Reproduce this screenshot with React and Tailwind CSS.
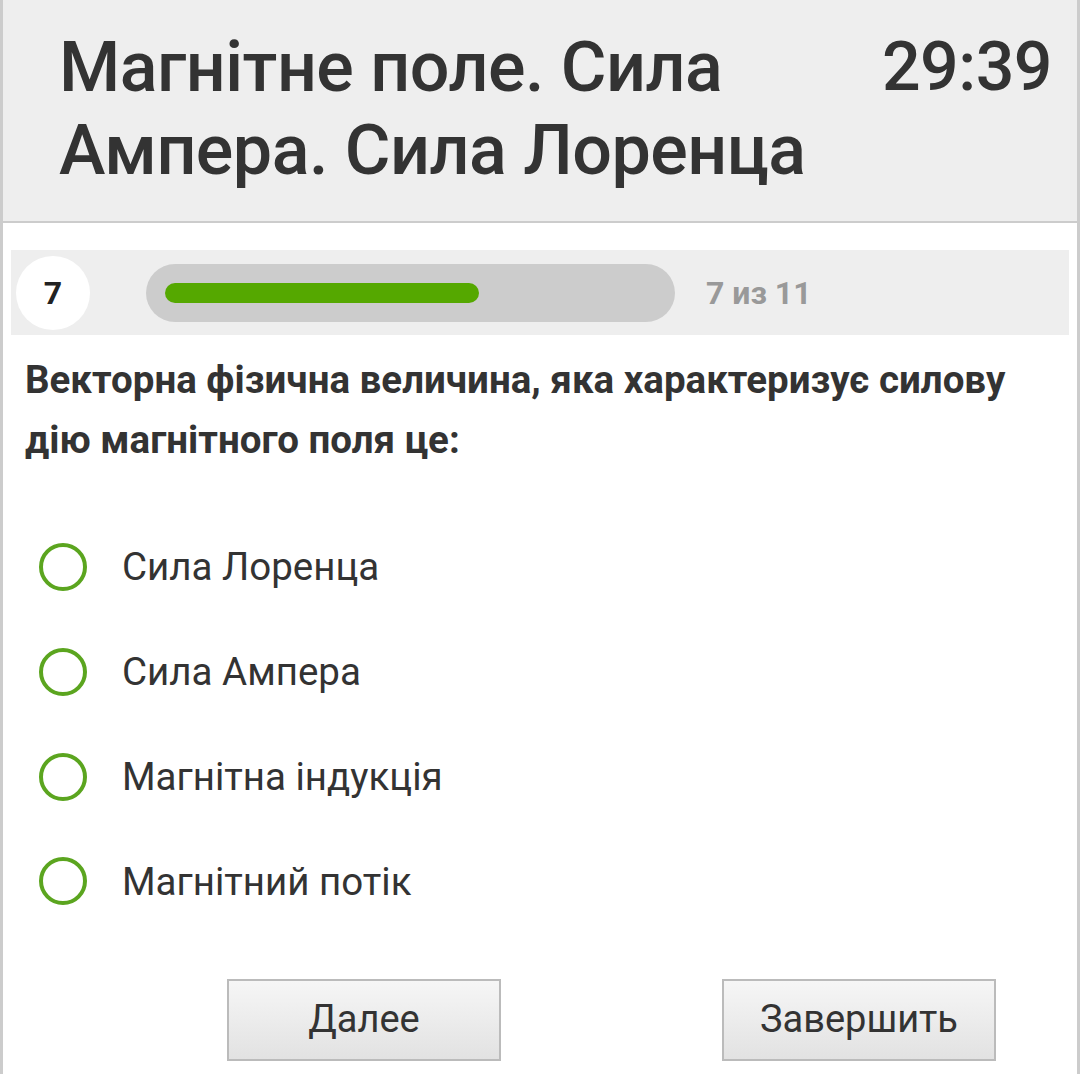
import React, { useState } from 'react';

const options = ['Сила Лоренца', 'Сила Ампера', 'Магнітна індукція', 'Магнітний потік'];

function App() {
  const [selected, setSelected] = useState(null);
  const current = 7;
  const total = 11;

  return (
    <div className="min-h-[1074px] w-[1080px] bg-white border-x-[3px] border-[#cccccc] text-[#333333]" style={{ fontFamily: 'Roboto, "Noto Sans", sans-serif' }}>
      <div className="bg-[#eeeeee] border-b-2 border-[#cccccc] h-[223px] flex justify-between pl-[56px] pr-[25px] pt-[26px]">
        <h1 className="text-[70px] leading-[83px] font-medium tracking-[-0.5px] w-[800px]">
          Магнітне поле. Сила Ампера. Сила Лоренца
        </h1>
        <div className="text-[68px] leading-[83px] font-medium tracking-[-0.5px]">29:39</div>
      </div>

      <div className="mt-[27px] mx-[8px] bg-[#eeeeee] h-[85px] flex items-center pl-[5px]">
        <div className="w-[74px] h-[74px] rounded-full bg-white flex items-center justify-center text-[32px] font-bold text-[#222]">
          {current}
        </div>
        <div className="ml-[56px] w-[529px] h-[58px] rounded-full bg-[#cccccc] flex items-center px-[19px]">
          <div className="h-[20px] w-[314px] rounded-full bg-[#55a800]" />
        </div>
        <div className="ml-[31px] text-[32px] font-bold text-[#999999]">
          {current} из {total}
        </div>
      </div>

      <p className="mt-[15px] px-[22px] text-[38.5px] font-bold leading-[60px] text-[#333333]">
        Векторна фізична величина, яка характеризує силову дію магнітного поля це:
      </p>

      <div className="mt-[45px] flex flex-col">
        {options.map((opt, i) => (
          <label key={i} className="flex items-center h-[104.7px] pl-[36px] cursor-pointer" onClick={() => setSelected(i)}>
            <span className="w-[48px] h-[48px] rounded-full border-4 border-[#5ba51f] flex items-center justify-center">
              {selected === i && <span className="w-[24px] h-[24px] rounded-full bg-[#5ba51f]" />}
            </span>
            <span className="ml-[35px] text-[38.5px] text-[#333333]">{opt}</span>
          </label>
        ))}
      </div>

      <div className="mt-[45px] flex pl-[224px] gap-[221px]">
        <button className="w-[274px] h-[82px] border-2 border-[#bbbbbb] bg-gradient-to-b from-[#f6f6f6] to-[#e2e2e2] text-[38px] text-[#333333]">
          Далее
        </button>
        <button className="w-[274px] h-[82px] border-2 border-[#bbbbbb] bg-gradient-to-b from-[#f6f6f6] to-[#e2e2e2] text-[38px] text-[#333333]">
          Завершить
        </button>
      </div>
    </div>
  );
}

export default App;
